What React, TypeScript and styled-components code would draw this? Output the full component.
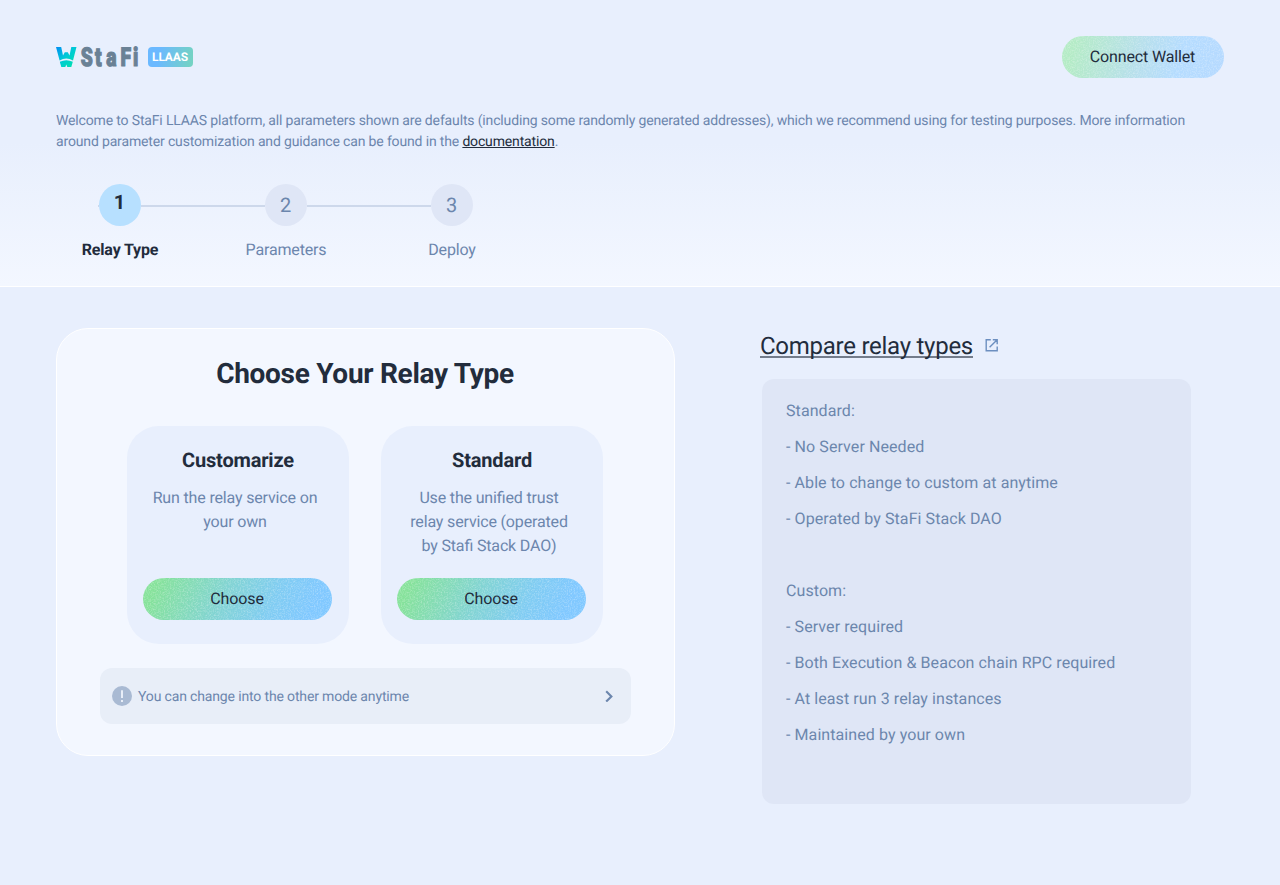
import React from "react";
import styled, { createGlobalStyle } from "styled-components";

const GlobalStyle = createGlobalStyle`
  * { box-sizing: border-box; }
  body {
    margin: 0;
    background: #e8effd;
    font-family: Roboto, "Liberation Sans", sans-serif;
    color: #222c3c;
    letter-spacing: -0.01em;
    text-rendering: geometricPrecision;
  }
`;

const Page = styled.div`
  width: 1280px;
  height: 885px;
  overflow: hidden;
`;

const Header = styled.header`
  height: 287px;
  padding: 36px 56px 0;
  border-bottom: 1px solid #fff;
  background: linear-gradient(180deg, #e8effd 50%, #f3f7ff 100%);
`;

const TopBar = styled.div`
  display: flex;
  justify-content: space-between;
  height: 42px;
`;

const Brand = styled.div`
  display: flex;
  align-items: flex-start;
  padding-top: 10px;
`;

const Tag = styled.span`
  width: 45px;
  height: 20px;
  margin: 1px 0 0 8px;
  padding-right: 1px;
  border-radius: 4px;
  background: linear-gradient(100deg, #6bb9ff 25%, #75d4c0 100%);
  color: #fff;
  font-size: 12px;
  font-weight: 700;
  line-height: 20px;
  letter-spacing: -0.15px;
  text-align: center;
`;

const GradientButton = styled.button<{ $width: number; $soft?: boolean }>`
  display: grid;
  place-items: center;
  width: ${(p) => p.$width}px;
  height: 42px;
  padding: 0;
  border: 0;
  border-radius: 21px;
  overflow: hidden;
  font: 400 16px/42px Roboto, sans-serif;
  letter-spacing: ${(p) => (p.$soft ? "-0.15px" : "-0.1px")};
  text-rendering: inherit;
  color: #222c3c;
  background: ${(p) =>
    p.$soft
      ? "linear-gradient(105deg, #b4ebc6 8%, #b7dfec 48%, #b5dcff 72%, #b5d9ff 100%)"
      : "linear-gradient(115deg, #86e29b 8%, #82d4d2 42%, #80ccf2 68%, #80c8ff 88%)"};
  & > * { grid-area: 1 / 1; }
`;

const ButtonLabel = styled.span`
  padding-right: 1px;
`;

const Intro = styled.p`
  margin: 33px 0 0;
  font-size: 14px;
  line-height: 21px;
  letter-spacing: -0.153px;
  color: #6c86ad;
`;

const DocLink = styled.a`
  color: #222c3c;
  text-decoration: underline;
`;

const Steps = styled.ol`
  display: flex;
  list-style: none;
  margin: 31px 0 0 -19px;
  padding: 0;
`;

const Step = styled.li`
  display: flex;
  flex-direction: column;
  width: 166px;
  align-items: center;
`;

const Track = styled.div`
  display: flex;
  align-items: center;
  width: 100%;
`;

const Rail = styled.span<{ $on: boolean; $stub?: boolean }>`
  flex: 1;
  height: 2px;
  margin-top: 2px;
  background: ${(p) =>
    p.$on ? "#cdd8eb" : p.$stub ? "linear-gradient(90deg, transparent 61px, #cdd8eb 61px)" : "transparent"};
`;

const Dot = styled.span<{ $active: boolean }>`
  width: 42px;
  height: 42px;
  padding-right: 1px;
  border-radius: 50%;
  background: ${(p) => (p.$active ? "#b7e0ff" : "#dfe6f6")};
  color: ${(p) => (p.$active ? "#222c3c" : "#6c86ad")};
  font-size: 20px;
  font-weight: ${(p) => (p.$active ? 700 : 400)};
  line-height: ${(p) => (p.$active ? 37 : 42)}px;
  text-align: center;
`;

const StepLabel = styled.span<{ $active: boolean }>`
  margin-top: 14px;
  font-size: 16px;
  line-height: 20px;
  font-weight: ${(p) => (p.$active ? 700 : 400)};
  color: ${(p) => (p.$active ? "#222c3c" : "#6c86ad")};
`;

const Main = styled.main`
  display: flex;
  align-items: flex-start;
  padding: 41px 56px 0;
`;

const Panel = styled.section`
  width: 619px;
  height: 428px;
  padding: 0 43px;
  border: 1px solid #fff;
  border-radius: 32px;
  background: #f3f7ff;
`;

const PanelTitle = styled.h1`
  margin: 28px 1px 0 0;
  font-size: 28px;
  line-height: 33px;
  font-weight: 700;
  letter-spacing: -0.29px;
  text-align: center;
`;

const Cards = styled.div`
  display: flex;
  gap: 32px;
  margin: 36px 0 0 27px;
`;

const Card = styled.article`
  display: flex;
  flex-direction: column;
  align-items: center;
  width: 222px;
  height: 218px;
  padding: 22px 17px 0 16px;
  border-radius: 32px;
  background: #e8effd;
`;

const CardTitle = styled.h2`
  margin: 0 0 0 1px;
  font-size: 20px;
  line-height: 24px;
  font-weight: 700;
  letter-spacing: -0.17px;
`;

const CardText = styled.p`
  width: 174px;
  height: 72px;
  margin: 14px 5px 20px 0;
  font-size: 16px;
  line-height: 24px;
  font-feature-settings: "liga" 1;
  color: #6c86ad;
  text-align: center;
`;

const Notice = styled.div`
  display: flex;
  align-items: center;
  width: 531px;
  height: 56px;
  margin-top: 24px;
  padding: 0 16px 0 12px;
  border-radius: 12px;
  background: #e8eef8;
  color: #6c86ad;
  font-size: 14px;
`;

const NoticeText = styled.span`
  flex: 1;
  margin: 2px 0 0 6px;
  line-height: 18px;
  letter-spacing: -0.15px;
`;

const Aside = styled.aside`
  margin: 3px 0 0 85px;
`;

const AsideHeading = styled.div`
  display: flex;
  align-items: center;
  gap: 12px;
  height: 30px;
`;

const AsideTitle = styled.a`
  font-size: 24px;
  line-height: 30px;
  letter-spacing: -0.26px;
  text-decoration: underline 2px #737c8b;
  text-underline-offset: 2px;
  text-decoration-skip-ink: none;
`;

const Compare = styled.div`
  width: 429px;
  height: 425px;
  margin: 18px 0 0 2px;
  padding: 14px 24px;
  border-radius: 12px;
  background: #dfe6f6;
  color: #6c86ad;
  font-size: 16px;
  letter-spacing: 0.08px;
`;

const Line = styled.div`
  height: 36px;
  line-height: 36px;
`;

const Grain = ({ id, width, strength }: { id: string; width: number; strength: number }) => (
  <svg width={width} height="42" aria-hidden="true">
    <filter id={id} x="0" y="0" width="100%" height="100%">
      <feTurbulence type="fractalNoise" baseFrequency="0.7" numOctaves="3" seed="4" />
      <feColorMatrix values={`0 0 0 0 1  0 0 0 0 1  0 0 0 0 1  ${strength} 0 0 0 ${-strength * 0.42}`} />
    </filter>
    <rect width={width} height="42" filter={`url(#${id})`} />
  </svg>
);

const LogoSvg = styled.svg`
  overflow: visible;
  letter-spacing: 0;
`;

const Logo = () => (
  <LogoSvg width="84" height="24" viewBox="0 0 84 24" role="img" aria-label="StaFi">
    <defs>
      <linearGradient id="mark" x1="0" y1="0" x2="1" y2="1">
        <stop offset="0.05" stopColor="#0093f0" />
        <stop offset="0.45" stopColor="#00c8d7" />
        <stop offset="1" stopColor="#00e6a8" />
      </linearGradient>
    </defs>
    <path
      fill="url(#mark)"
      d="M0 1H5.2L7 9.4L8.8 6.3H11.8L13.5 9.4L15.3 1H20.5L17 14.4Q10.3 10.8 3.6 14.4ZM3.8 15.8Q10.3 12.6 16.8 15.8L15.3 21H11.3L10.3 18.6L9.3 21H5.3Z"
    />
    <text
      transform="translate(0 20.4) scale(0.74 1)"
      fontFamily="Roboto, sans-serif"
      fontWeight="900"
      fontSize="26"
      x="33.4 52.6 67.8 87 104"
      fill="#6a8195"
      stroke="#6a8195"
      strokeWidth="1.2"
    >
      StaFi
    </text>
  </LogoSvg>
);

const steps = ["Relay Type", "Parameters", "Deploy"];

const relayTypes = [
  { name: "Customarize", text: "Run the relay service on your own" },
  { name: "Standard", text: "Use the unified trust relay service (operated by Stafi Stack DAO)" },
];

const comparison = [
  "Standard:",
  "- No Server Needed",
  "- Able to change to custom at anytime",
  "- Operated by StaFi Stack DAO",
  "",
  "Custom:",
  "- Server required",
  "- Both Execution & Beacon chain RPC required",
  "- At least run 3 relay instances",
  "- Maintained by your own",
];

export default function App() {
  return (
    <Page>
      <GlobalStyle />
      <Header>
        <TopBar>
          <Brand>
            <Logo />
            <Tag>LLAAS</Tag>
          </Brand>
          <GradientButton $width={162} $soft>
            <Grain id="grain-wallet" width={162} strength={0.7} />
            <ButtonLabel>Connect Wallet</ButtonLabel>
          </GradientButton>
        </TopBar>
        <Intro>
          Welcome to StaFi LLAAS platform, all parameters shown are defaults (including some randomly generated
          addresses), which we recommend using for testing purposes. More information around parameter customization
          and guidance can be found in the <DocLink>documentation</DocLink>.
        </Intro>
        <Steps>
          {steps.map((label, i) => (
            <Step key={label}>
              <Track>
                <Rail $on={i > 0} $stub={i === 0} />
                <Dot $active={i === 0}>{i + 1}</Dot>
                <Rail $on={i < steps.length - 1} />
              </Track>
              <StepLabel $active={i === 0}>{label}</StepLabel>
            </Step>
          ))}
        </Steps>
      </Header>
      <Main>
        <Panel>
          <PanelTitle>Choose Your Relay Type</PanelTitle>
          <Cards>
            {relayTypes.map((r) => (
              <Card key={r.name}>
                <CardTitle>{r.name}</CardTitle>
                <CardText>{r.text}</CardText>
                <GradientButton $width={189}>
                  <Grain id={`grain-${r.name}`} width={189} strength={0.7} />
                  <ButtonLabel>Choose</ButtonLabel>
                </GradientButton>
              </Card>
            ))}
          </Cards>
          <Notice>
            <svg width="20" height="20" viewBox="0 0 20 20">
              <circle cx="10" cy="10" r="10" fill="#a9bad3" />
              <path d="M9 4.3H11V12H9ZM9 14H11V16H9Z" fill="#e8eef8" />
            </svg>
            <NoticeText>You can change into the other mode anytime</NoticeText>
            <svg width="12" height="12" viewBox="0 0 12 12" fill="none" stroke="#6c86ad" strokeWidth="2.1">
              <path d="M3.2 1.2L8.4 6.4L3.2 11.6" />
            </svg>
          </Notice>
        </Panel>
        <Aside>
          <AsideHeading>
            <AsideTitle>Compare relay types</AsideTitle>
            <svg width="14" height="14" viewBox="0 0 14 14" fill="none" stroke="#6c8fc0" strokeWidth="1.4">
              <path d="M5.8 0.7H1.2V11.7H12.2V7.5M7.8 0.7H12.2V5.2M12.2 0.7L4.6 8.3" />
            </svg>
          </AsideHeading>
          <Compare>
            {comparison.map((text, i) => (
              <Line key={i}>{text}</Line>
            ))}
          </Compare>
        </Aside>
      </Main>
    </Page>
  );
}
